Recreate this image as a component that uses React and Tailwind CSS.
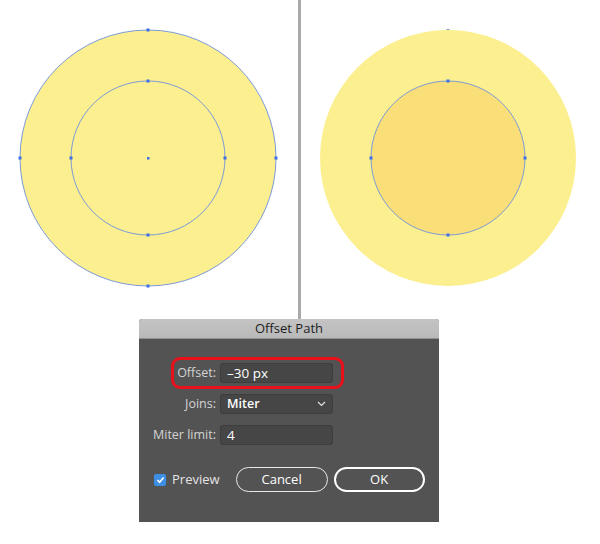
import React from "react";

const Y = "#fbef8f";
const Y2 = "#fadf78";
const S = "#7c9ad8";
const P = "#3f6fe6";

function Pt({ x, y }) {
  return <rect x={x - 1.5} y={y - 1.5} width="3" height="3" fill={P} />;
}

function LeftArt() {
  const cx = 148, cy = 158;
  return (
    <svg width="298" height="319" className="block">
      <circle cx={cx} cy={cy} r="128" fill={Y} stroke={S} strokeWidth="1" />
      <circle cx={cx} cy={cy} r="77" fill={Y} stroke={S} strokeWidth="1" />
      <Pt x={cx} y={cy - 128} />
      <Pt x={cx} y={cy + 128} />
      <Pt x={cx - 128} y={cy} />
      <Pt x={cx + 128} y={cy} />
      <Pt x={cx} y={cy - 77} />
      <Pt x={cx} y={cy + 77} />
      <Pt x={cx - 77} y={cy} />
      <Pt x={cx + 77} y={cy} />
      <rect x={cx - 1} y={cy - 1} width="2.5" height="2.5" fill={P} />
    </svg>
  );
}

function RightArt() {
  const cx = 147, cy = 158;
  return (
    <svg width="299" height="319" className="block">
      <circle cx={cx} cy={cy} r="128" fill={Y} />
      <circle cx={cx} cy={cy} r="77" fill={Y2} stroke={S} strokeWidth="1" />
      <rect x={cx - 1.5} y={29} width="3" height="1" fill={S} />
      <Pt x={cx} y={cy - 77} />
      <Pt x={cx} y={cy + 77} />
      <Pt x={cx - 77} y={cy} />
      <Pt x={cx + 77} y={cy} />
    </svg>
  );
}

function Row({ label, children }) {
  return (
    <div className="flex items-center h-[20px]">
      <div className="w-[77px] text-right text-[12.5px] text-[#d4d4d4]">{label}</div>
      <div className="ml-[4px] w-[113px] h-[20px] rounded-[3px] bg-[#464646] border border-[#3d3d3d] flex items-center px-[6px] text-[13.5px] text-white">
        {children}
      </div>
    </div>
  );
}

export default function App() {
  return (
    <div
      className="w-[600px] h-[544px] bg-white overflow-hidden"
      style={{ fontFamily: "'Open Sans', 'Liberation Sans', sans-serif" }}
    >
      <div className="flex h-[319px]">
        <LeftArt />
        <div className="w-[3px] h-full bg-[#a9a9a9]" />
        <RightArt />
      </div>
      <div className="ml-[139px] w-[300px] h-[203px] relative rounded-t-[3px] overflow-hidden bg-[#535353]">
        <div className="h-[20px] bg-gradient-to-b from-[#c4c4c4] to-[#b9b9b9] border-b border-[#8f8f8f] flex items-center justify-center text-[13px] text-[#1e1e1e]">
          Offset Path
        </div>
        <div className="pt-[24px] flex flex-col gap-[11px]">
          <Row label="Offset:">–30 px</Row>
          <Row label="Joins:">
            <span className="flex-1 font-semibold text-[12.5px]">Miter</span>
            <svg width="9" height="6" viewBox="0 0 9 6">
              <path d="M1 1 L4.5 4.5 L8 1" fill="none" stroke="#e0e0e0" strokeWidth="1.2" />
            </svg>
          </Row>
          <Row label="Miter limit:">4</Row>
        </div>
        <div className="mt-[22px] flex items-center">
          <div className="ml-[15px] w-[12px] h-[12px] rounded-[2px] bg-[#3d8ee5] flex items-center justify-center">
            <svg width="9" height="8" viewBox="0 0 9 8">
              <path d="M1.5 4 L3.6 6.2 L7.6 1.5" fill="none" stroke="white" strokeWidth="1.6" />
            </svg>
          </div>
          <span className="ml-[6px] text-[13px] text-[#e4e4e4]">Preview</span>
          <div className="ml-[16px] w-[92px] h-[25px] rounded-full border border-[#e8e8e8] flex items-center justify-center text-[13px] text-white">
            Cancel
          </div>
          <div className="ml-[6px] w-[91px] h-[25px] rounded-full border-2 border-white flex items-center justify-center text-[13px] text-white">
            OK
          </div>
        </div>
        <div className="absolute left-[32px] top-[38px] w-[173px] h-[32px] rounded-[9px] border-[3px] border-[#e8101a]" />
      </div>
    </div>
  );
}
